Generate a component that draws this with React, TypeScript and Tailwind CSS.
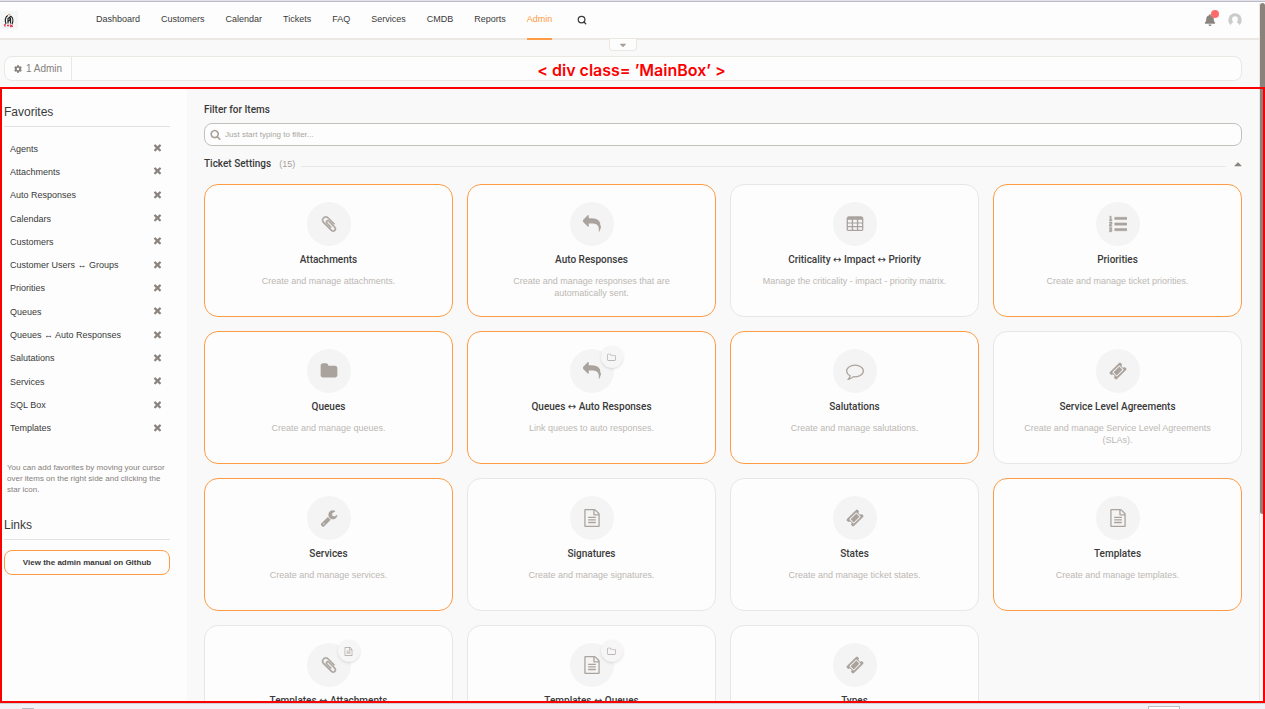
import React from "react";
import { FaBell, FaCaretDown, FaCaretUp, FaCog, FaListOl } from "react-icons/fa";
import { LuSearch } from "react-icons/lu";

const glyphs = {
  clip: "M1596 1385q0 117-79 196t-196 79q-135 0-235-100l-777-776q-113-115-113-271 0-159 110-270t269-111q158 0 273 113l605 606q10 10 10 22 0 16-30.5 46.5t-46.5 30.5q-13 0-23-10l-606-607q-79-77-181-77-106 0-179 75t-73 181q0 105 76 181l776 777q63 63 145 63 64 0 106-42t42-106q0-82-63-145l-581-581q-26-24-60-24-29 0-48 19t-19 48q0 32 25 59l410 410q10 10 10 22 0 16-31 47t-47 31q-12 0-22-10l-410-410q-63-61-63-149 0-82 57-139t139-57q88 0 149 63l581 581q100 98 100 235z",
  reply: "M1792 1120q0 166-127 451-3 7-10.5 24t-13.5 30-13 22q-12 17-28 17-15 0-23.5-10t-8.5-25q0-9 2.5-26.5t2.5-23.5q5-68 5-123 0-112-19.5-200.5t-54-153.5-89-112-117-78.5-145.5-44.5-167-20.5-186-5.5h-224v256q0 26-19 45t-45 19-45-19l-512-512q-19-19-19-45t19-45l512-512q19-19 45-19t45 19 19 45v256h224q713 0 875 403 53 134 53 333z",
  table: "M288 128h1216q92 0 158 66t66 158v1088q0 66-47 113t-113 47h-1344q-66 0-113-47t-47-113v-1088q0-92 66-158t158-66zM192 512v192q0 32 32 32h320q32 0 32-32v-192q0-32-32-32h-320q-32 0-32 32zM704 512v192q0 32 32 32h320q32 0 32-32v-192q0-32-32-32h-320q-32 0-32 32zM1216 512v192q0 32 32 32h320q32 0 32-32v-192q0-32-32-32h-320q-32 0-32 32zM192 880v192q0 32 32 32h320q32 0 32-32v-192q0-32-32-32h-320q-32 0-32 32zM704 880v192q0 32 32 32h320q32 0 32-32v-192q0-32-32-32h-320q-32 0-32 32zM1216 880v192q0 32 32 32h320q32 0 32-32v-192q0-32-32-32h-320q-32 0-32 32zM192 1248v192q0 32 32 32h320q32 0 32-32v-192q0-32-32-32h-320q-32 0-32 32zM704 1248v192q0 32 32 32h320q32 0 32-32v-192q0-32-32-32h-320q-32 0-32 32zM1216 1248v192q0 32 32 32h320q32 0 32-32v-192q0-32-32-32h-320q-32 0-32 32z",
  folder: "M1728 608v704q0 92-66 158t-158 66h-1216q-92 0-158-66t-66-158v-960q0-92 66-158t158-66h320q92 0 158 66t66 158v32h672q92 0 158 66t66 158z",
  folderLine: "M1600 1312v-704q0-40-28-68t-68-28h-704q-40 0-68-28t-28-68v-64q0-40-28-68t-68-28h-320q-40 0-68 28t-28 68v960q0 40 28 68t68 28h1216q40 0 68-28t28-68zm128-704v704q0 92-66 158t-158 66h-1216q-92 0-158-66t-66-158v-960q0-92 66-158t158-66h320q92 0 158 66t66 158v32h672q92 0 158 66t66 158z",
  comment: "M896 384q-204 0-381.5 69.5t-282 187.5-104.5 255q0 112 71.5 213.5t201.5 175.5l87 50-27 96q-24 91-70 172 152-63 275-171l43-38 57 6q69 8 130 8 204 0 381.5-69.5t282-187.5 104.5-255-104.5-255-282-187.5-381.5-69.5zm896 512q0 174-120 321.5t-326 233-450 85.5q-70 0-145-8-198 175-460 242-49 14-114 22h-5q-15 0-27-10.5t-16-27.5v-1q-3-4-.5-12t2-10 4.5-9.5l6-9 7-8.5 8-9q7-8 31-34.5t34.5-38 31-39.5 32.5-51 27-59 26-76q-157-89-247.5-220t-90.5-281q0-174 120-321.5t326-233 450-85.5 450 85.5 326 233 120 321.5z",
  ticket: "M1024 452l316 316-572 572-316-316zm-211 979l618-618q19-19 19-45t-19-45l-362-362q-18-18-45-18t-45 18l-618 618q-19 19-19 45t19 45l362 362q18 18 45 18t45-18zm889-637l-907 908q-37 37-90.5 37t-90.5-37l-126-126q56-56 56-136t-56-136-136-56-136 56l-125-126q-37-37-37-90.5t37-90.5l907-906q37-37 90.5-37t90.5 37l125 125q-56 56-56 136t56 136 136 56 136-56l126 125q37 37 37 90.5t-37 90.5z",
  wrench: "M448 1472q0-26-19-45t-45-19-45 19-19 45 19 45 45 19 45-19 19-45zm644-420l-682 682q-37 37-90 37-52 0-91-37l-106-108q-38-36-38-90 0-53 38-91l681-681q39 98 114.5 173.5t173.5 114.5zm634-435q0 39-23 106-47 134-164.5 217.5t-258.5 83.5q-185 0-316.5-131.5t-131.5-316.5 131.5-316.5 316.5-131.5q58 0 121.5 16.5t107.5 46.5q16 11 16 28t-16 28l-293 169v224l193 107q5-3 79-48.5t135.5-81 70.5-35.5q15 0 23.5 10t8.5 25z",
  doc: "M1596 380q28 28 48 76t20 88v1152q0 40-28 68t-68 28h-1344q-40 0-68-28t-28-68v-1600q0-40 28-68t68-28h896q40 0 88 20t76 48zm-444-244v376h376q-10-29-22-41l-313-313q-12-12-41-22zm384 1528v-1024h-416q-40 0-68-28t-28-68v-416h-768v1536h1280zm-1024-864q0-14 9-23t23-9h704q14 0 23 9t9 23v64q0 14-9 23t-23 9h-704q-14 0-23-9t-9-23v-64zm736 224q14 0 23 9t9 23v64q0 14-9 23t-23 9h-704q-14 0-23-9t-9-23v-64q0-14 9-23t23-9h704zm0 256q14 0 23 9t9 23v64q0 14-9 23t-23 9h-704q-14 0-23-9t-9-23v-64q0-14 9-23t23-9h704z",
  times: "M1490 1322q0 40-28 68l-136 136q-28 28-68 28t-68-28l-294-294-294 294q-28 28-68 28t-68-28l-136-136q-28-28-28-68t28-68l294-294-294-294q-28-28-28-68t28-68l136-136q28-28 68-28t68 28l294 294 294-294q28-28 68-28t68 28l136 136q28 28 28 68t-28 68l-294 294 294 294q28 28 28 68z",
  search: "M1216 832q0-185-131.5-316.5t-316.5-131.5-316.5 131.5-131.5 316.5 131.5 316.5 316.5 131.5 316.5-131.5 131.5-316.5zm512 832q0 52-38 90t-90 38q-54 0-90-38l-343-342q-179 124-399 124-143 0-273.5-55.5t-225-150-150-225-55.5-273.5 55.5-273.5 150-225 225-150 273.5-55.5 273.5 55.5 225 150 150 225 55.5 273.5q0 220-124 399l343 343q37 37 37 90z",
};

type GlyphName = keyof typeof glyphs;

function Glyph({ name, className }: { name: GlyphName; className: string }) {
  return (
    <svg
      viewBox="0 0 1792 1792"
      fill="currentColor"
      stroke="currentColor"
      strokeWidth={name === "clip" ? 40 : 0}
      fillRule={name === "table" ? "evenodd" : "nonzero"}
      className={className}
      aria-hidden="true"
    >
      <path d={glyphs[name]} />
    </svg>
  );
}

type Item = { title: string; text: string; icon: GlyphName | "list"; favorite?: boolean; badge?: GlyphName };

const items: Item[] = [
  { title: "Attachments", text: "Create and manage attachments.", icon: "clip", favorite: true },
  { title: "Auto Responses", text: "Create and manage responses that are automatically sent.", icon: "reply", favorite: true },
  { title: "Criticality ↔ Impact ↔ Priority", text: "Manage the criticality - impact - priority matrix.", icon: "table" },
  { title: "Priorities", text: "Create and manage ticket priorities.", icon: "list", favorite: true },
  { title: "Queues", text: "Create and manage queues.", icon: "folder", favorite: true },
  { title: "Queues ↔ Auto Responses", text: "Link queues to auto responses.", icon: "reply", favorite: true, badge: "folderLine" },
  { title: "Salutations", text: "Create and manage salutations.", icon: "comment", favorite: true },
  { title: "Service Level Agreements", text: "Create and manage Service Level Agreements (SLAs).", icon: "ticket" },
  { title: "Services", text: "Create and manage services.", icon: "wrench", favorite: true },
  { title: "Signatures", text: "Create and manage signatures.", icon: "doc" },
  { title: "States", text: "Create and manage ticket states.", icon: "ticket" },
  { title: "Templates", text: "Create and manage templates.", icon: "doc", favorite: true },
  { title: "Templates ↔ Attachments", text: "", icon: "clip", badge: "doc" },
  { title: "Templates ↔ Queues", text: "", icon: "doc", badge: "folderLine" },
  { title: "Types", text: "", icon: "ticket" },
];

const nav = ["Dashboard", "Customers", "Calendar", "Tickets", "FAQ", "Services", "CMDB", "Reports", "Admin"];

const favorites = [
  "Agents", "Attachments", "Auto Responses", "Calendars", "Customers", "Customer Users ↔ Groups", "Priorities",
  "Queues", "Queues ↔ Auto Responses", "Salutations", "Services", "SQL Box", "Templates",
];

/* The arrow between linked entities takes a wider face than the words around it. */
function Linked({ text }: { text: string }) {
  return (
    <>
      {text.split("↔").map((part, i) => (
        <React.Fragment key={i}>
          {i > 0 && <span className="font-['DejaVu_Sans'] leading-none">↔</span>}
          {part}
        </React.Fragment>
      ))}
    </>
  );
}

function Logo() {
  return (
    <svg viewBox="0 0 18 18" className="h-[18px] w-[18px]" aria-label="Home">
      <rect width="18" height="18" fill="#f5f6f6" />
      <path d="M6 13C4.500 9 5.500 5.500 8 4.500M12 13c1.500-3 1-6.500-1.500-8M8 12.500V7.500l2-1.500v3l-1.500 1M10.500 7v5.500" fill="none" stroke="#222" strokeWidth="1.200" />
      <path d="M8 3.500l1.200-1 1.300 1-1.300 1z" fill="#d9a45b" />
      <path d="M4 13.500l1.500 2M5.500 13l-1 2.500M7 14.500h2M8 13.500v2M10 13.500l1 2 1.500-2M10 15.500h3" fill="none" stroke="#e8415c" strokeWidth="1.200" />
    </svg>
  );
}

function Header() {
  return (
    <header className="relative flex h-[38px] shrink-0 items-stretch border-b-2 border-[#ebe7e2] bg-[#fdfdfd] pr-[23px]">
      <a href="#home" className="flex w-24 items-center">
        <Logo />
      </a>
      <nav className="flex flex-1 gap-[21px]">
        {nav.map((label) => (
          <a
            key={label}
            href={"#" + label.toLowerCase()}
            className={
              label === "Admin"
                ? "-mb-0.5 flex items-center border-b-2 border-[#ff9b44] pb-0.5 text-[#ff9b44]"
                : "flex items-center pb-0.5"
            }
          >
            {label}
          </a>
        ))}
        <button type="button" aria-label="Search" className="ml-1 flex items-center">
          <LuSearch className="h-[10px] w-[10px] stroke-[3]" />
        </button>
      </nav>
      <div className="flex items-center gap-3">
        <button type="button" aria-label="Notifications" className="relative">
          <FaBell className="h-[12px] w-[12px] text-[#8b847e]" />
          <span className="absolute -top-1 left-[7px] h-2 w-2 rounded-full bg-[#ff6b6b]" />
        </button>
        <button type="button" aria-label="Profile">
          <svg viewBox="0 0 14 14" className="h-[14px] w-[14px]">
            <circle cx="7" cy="7" r="6.700" fill="#cbcbcb" />
            <path d="M7 3.200a2.900 2.900 0 0 1 2.900 3c0 1.500-.8 2.200-.8 3.200l2 1.700V14H2.900v-2.900l2-1.700c0-1-.8-1.700-.8-3.200a2.900 2.900 0 0 1 2.900-3z" fill="#fdfdfd" />
          </svg>
        </button>
      </div>
      <button
        type="button"
        aria-label="Expand toolbar"
        className="absolute left-[609px] top-[37px] flex h-3 w-7 items-end justify-center rounded-b border border-t-0 border-[#ebe7e2] bg-[#fdfdfd] text-[#a8a099]"
      >
        <FaCaretDown className="h-[10px] w-[10px]" />
      </button>
    </header>
  );
}

function Card({ item }: { item: Item }) {
  return (
    <a
      href="#item"
      className={
        "flex h-[133px] flex-col items-center rounded-[14px] border bg-[#fdfdfd] px-7 pt-[17px] text-center " +
        (item.favorite ? "border-[#ff9b44]" : "border-[#e9e7e3]")
      }
    >
      <span className="relative flex h-11 w-11 shrink-0 items-center justify-center rounded-full bg-[#f4f4f4] text-[#aaa39d]">
        {item.icon === "list" ? (
          <FaListOl className="h-[18px] w-[18px] stroke-current stroke-[14]" />
        ) : (
          <Glyph name={item.icon} className="h-[18px] w-[18px]" />
        )}
        {item.badge && (
          <span className="absolute -right-[9px] -top-[3px] flex h-[22px] w-[22px] items-center justify-center rounded-full bg-[#f6f6f6] shadow-sm">
            <Glyph name={item.badge} className="h-[9px] w-[9px]" />
          </span>
        )}
      </span>
      <h3 className="mt-2 h-3 whitespace-nowrap font-['Roboto'] text-[10px] font-medium leading-3">
        <Linked text={item.title} />
      </h3>
      {item.text && <p className="mt-[9px] leading-3 text-[#bcb7b3]">{item.text}</p>}
    </a>
  );
}

function Sidebar() {
  return (
    <aside className="w-[185px] shrink-0 bg-[#fdfdfd] pl-0.5 pr-[17px]">
      <h2 className="border-b border-[#e4e2df] pb-1.5 pt-[15px] text-xs leading-4">Favorites</h2>
      <ul className="mt-[10px] grid h-[303px] auto-rows-fr items-center pl-1.5 pr-[7px]">
        {favorites.map((name) => (
          <li key={name} className="flex items-center justify-between">
            <a href="#favorite">{name}</a>
            <button type="button" aria-label={"Remove " + name} className="pb-0.5 text-[#8b847e]">
              <Glyph name="times" className="h-[11px] w-[11px]" />
            </button>
          </li>
        ))}
      </ul>
      <p className="mt-[22px] pl-[3px] text-[8px] leading-[11px] text-[#85807b]">
        You can add favorites by moving your cursor over items on the right side and clicking the star icon.
      </p>
      <h2 className="mt-[22px] border-b border-[#e4e2df] pb-1.5 text-xs leading-4">Links</h2>
      <a
        href="#manual"
        className="mt-[10px] flex h-[25px] items-center justify-center rounded-lg border border-[#ff9b44] text-[8px] font-bold"
      >
        View the admin manual on Github
      </a>
    </aside>
  );
}

export default function App() {
  return (
    <div className="relative flex h-screen flex-col overflow-hidden bg-[#f9f9f9] font-['Liberation_Sans',sans-serif] text-[9px] leading-3 text-[#3a3a3a]">
      <div className="h-0.5 shrink-0 border-b border-[#bcbcc6] bg-[#e2e2ea]" />
      <Header />

      <div className="mb-1.5 ml-1 mr-[23px] mt-4 flex h-[25px] shrink-0 items-stretch rounded-lg border border-[#ebe7e2] bg-[#fdfdfd]">
        <div className="flex w-[67px] items-center gap-1 border-r border-[#ebe7e2] pl-[9px] text-[#85807b]">
          <FaCog className="h-2 w-2" />
          <a href="#admin" className="text-[10px]">1 Admin</a>
        </div>
        <p className="flex flex-1 items-center justify-center pr-[50px] pt-0.5 font-['Inter'] text-base font-semibold text-[#fb0000]">
          &lt; div class= ’MainBox’ &gt;
        </p>
      </div>

      <div className="absolute bottom-1.5 right-0 top-[3px] w-1.5 border-l border-[#e9e7e3]">
        <div className="h-[73%] rounded bg-[#8a827b]" />
      </div>

      <div className="relative flex min-h-0 flex-1 overflow-hidden border-2 border-[#fb0000]">
        <Sidebar />
        <main className="min-w-0 flex-1 pl-[17px] pr-[21px] pt-[15px]">
          <label htmlFor="filter" className="block font-['Roboto'] text-[10px] font-medium">
            Filter for Items
          </label>
          <div className="mt-[7px] flex h-[23px] items-center gap-1 rounded-lg border border-[#c4c1bd] bg-[#fdfdfd] pl-[5px]">
            <Glyph name="search" className="h-[11px] w-[11px] text-[#a8a099]" />
            <input
              id="filter"
              type="text"
              placeholder="Just start typing to filter..."
              className="flex-1 bg-transparent text-[8px] outline-none placeholder:text-[#aaa5a0]"
            />
          </div>
          <div className="mt-3 flex items-center">
            <h2 className="font-['Roboto'] text-[10px] font-medium">Ticket Settings</h2>
            <span className="ml-2 text-[#a8a099]">(15)</span>
            <span className="ml-1.5 mr-2 mt-1 h-px flex-1 bg-[#e9e7e3]" />
            <button type="button" aria-label="Collapse">
              <FaCaretUp className="h-3 w-2 text-[#8b847e]" />
            </button>
          </div>
          <div className="mt-[14px] grid grid-cols-4 gap-[14px]">
            {items.map((item) => (
              <Card key={item.title} item={item} />
            ))}
          </div>
        </main>
      </div>

      <footer className="flex h-1.5 shrink-0 items-end justify-between overflow-hidden border-t border-[#cfcfd6] bg-[#f2f2f6] pl-[22px] pr-[85px]">
        <span className="h-px w-3 bg-[#b8b8c0]" />
        <span className="h-[3px] w-8 border border-b-0 border-[#bcbcc6] bg-white" />
      </footer>
    </div>
  );
}
